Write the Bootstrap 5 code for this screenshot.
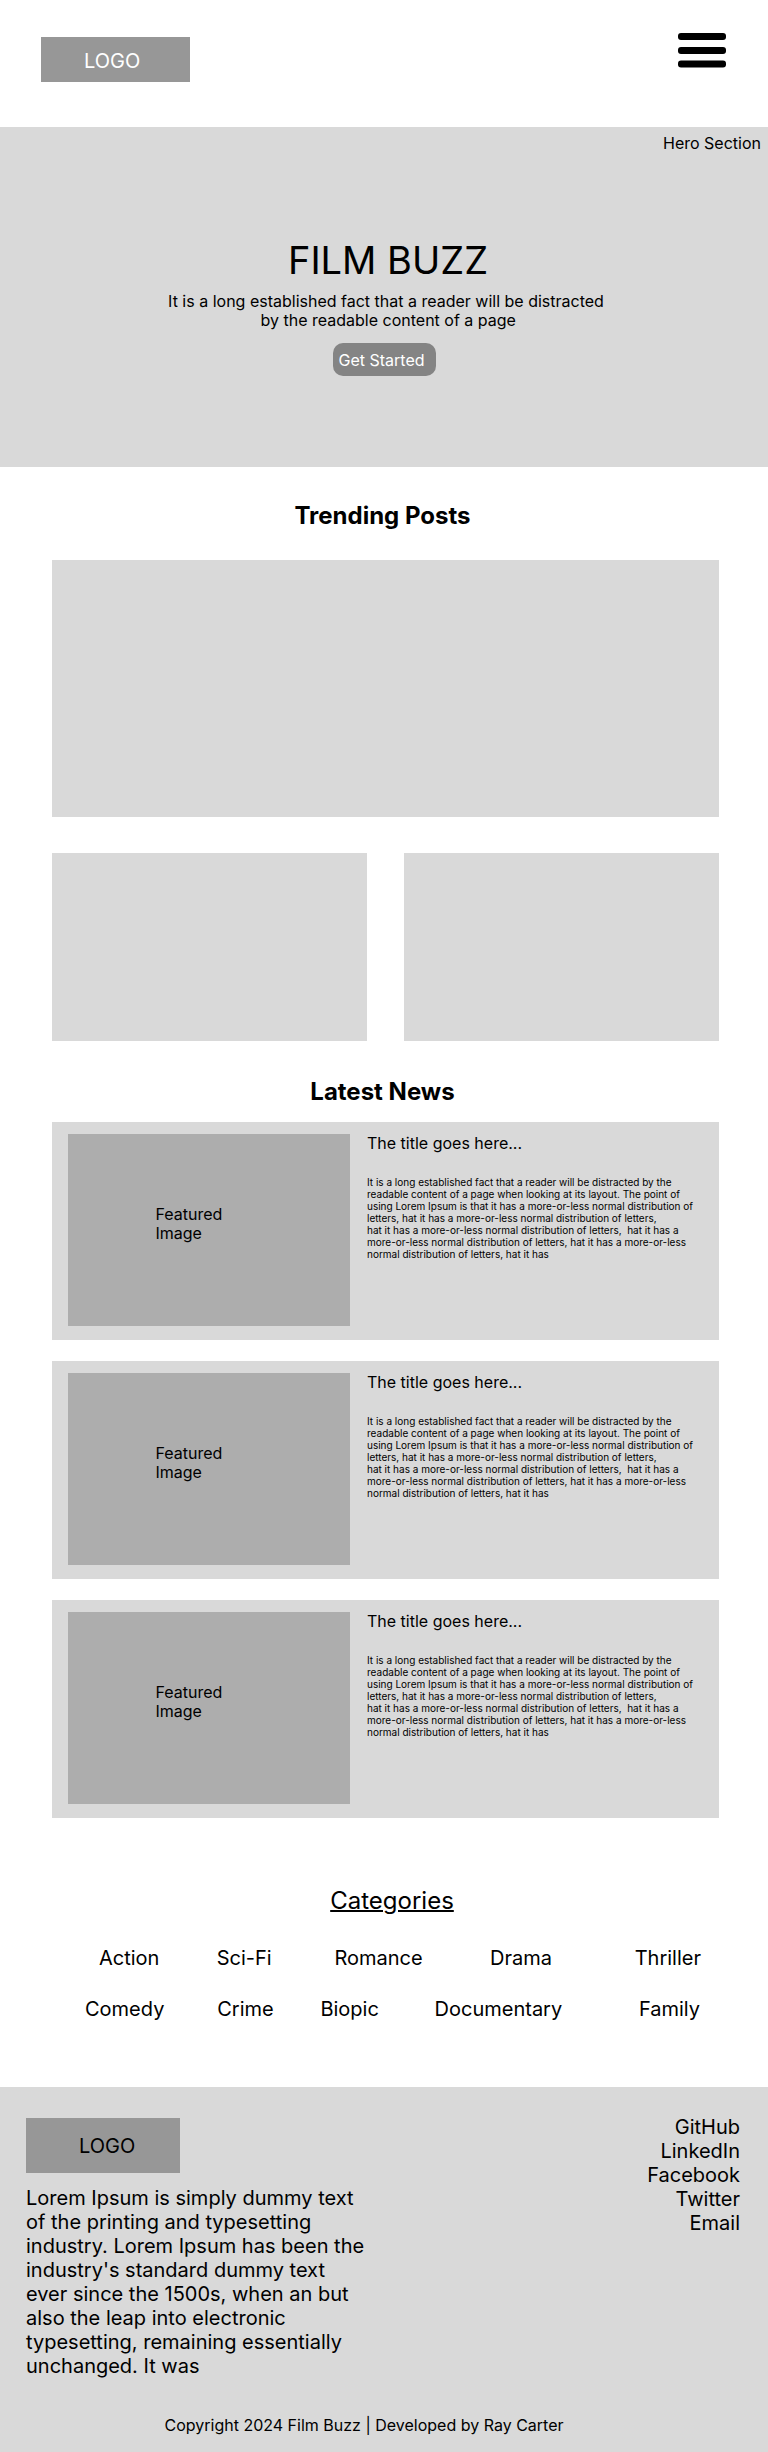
<!DOCTYPE html>
<html lang="en">
<head>
<meta charset="utf-8">
<meta name="viewport" content="width=device-width, initial-scale=1">
<title>Film Buzz</title>
<link href="https://cdn.jsdelivr.net/npm/bootstrap@5.3.0/dist/css/bootstrap.min.css" rel="stylesheet">
<style>
  body { font-family: Inter, "Liberation Sans", sans-serif; font-size: 16px; line-height: 19px; color: #000; background: #fff; }
  a { color: inherit; text-decoration: none; }
  .panel { background: #d9d9d9; }

  .site-header { padding: 33px 42px 45px 41px; }
  .brand { background: #979797; font-size: 20px; line-height: 24px; }
  .brand-top { width: 149px; padding: 12px 0 9px 43px; color: #fff; }
  .brand-foot { width: 154px; padding: 16px 0 15px 53px; }
  .menu-btn { line-height: 0; }

  .hero { padding: 7px 7px 91px; }
  .hero h1 { font-size: 38px; line-height: 48px; font-weight: 400; margin: 83px 0 8px; }
  .hero-text { margin-bottom: 13px; }
  .cta { --bs-btn-color: #fff; --bs-btn-bg: #848484; --bs-btn-border-width: 0; --bs-btn-hover-color: #fff; --bs-btn-hover-bg: #707070;
         width: 103px; padding: 8px 6px 6px; border-radius: 10px; line-height: 19px; text-align: left; }

  .section-title { font-size: 24px; line-height: 29px; font-weight: 700; text-align: center; margin: 0; }
  .trending .section-title { padding: 34px 3px 30px 0; }
  .news .section-title { padding: 36px 3px 16px 0; }
  .inset { margin: 0 49px 0 52px; }
  .tiles { display: grid; grid-template-columns: 1fr 1fr; gap: 36px 37px; }
  .tile-wide { grid-column: 1 / -1; aspect-ratio: 667 / 257; }
  .tile { aspect-ratio: 315 / 188; }

  .news-list { display: grid; gap: 21px; }
  .news-item { display: grid; grid-template-columns: 282px 1fr; gap: 17px; padding: 12px 16px 14px 16px; }
  .thumb { background: #adadad; min-height: 192px; padding-bottom: 12px; }
  .thumb span { width: 107px; }
  .news-item h3 { font-size: 16px; line-height: 19px; font-weight: 400; margin: 0 0 23px; }
  .news-item p { font-size: 10px; line-height: 12px; margin: 0; }

  .genres { padding: 68px 0 66px; font-size: 20px; line-height: 24px; }
  .genres h2 { font-size: 24px; line-height: 29px; font-weight: 400; margin: 0 0 31px; text-decoration: underline; text-decoration-thickness: 2px; }
  .genre-row { display: grid; }
  .genre-row.first { grid-template-columns: 118fr 118fr 156fr 145fr auto; padding: 0 67px 27px 99px; }
  .genre-row.second { grid-template-columns: 132fr 103fr 114fr 204fr auto; padding: 0 68px 0 85px; }

  .site-footer { padding: 28px 28px 17px 26px; }
  .footer-main { font-size: 20px; line-height: 24px; }
  .about { max-width: 340px; padding-top: 3px; }
  .about p { margin: 13px 0 0; }
  .copyright { margin: 38px 0 0; padding-right: 38px; }
</style>
</head>
<body>
<header class="site-header d-flex justify-content-between align-items-start">
  <a href="#" class="brand brand-top mt-1">LOGO</a>
  <button type="button" class="menu-btn btn p-0 border-0" aria-label="Menu">
    <svg width="48" height="35" viewBox="0 0 48 35" aria-hidden="true">
      <rect width="48" height="7" y="0" rx="3"/><rect width="48" height="7" y="14" rx="3"/><rect width="48" height="7" y="27.5" rx="3"/>
    </svg>
  </button>
</header>

<main>
  <section class="hero panel text-center">
    <div class="text-end">Hero Section</div>
    <h1 class="ps-2">FILM BUZZ</h1>
    <p class="hero-text ps-1">It is a long established fact that a reader will be distracted<br>&nbsp;by the readable content of a page</p>
    <button type="button" class="btn cta">Get Started</button>
  </section>

  <section class="trending">
    <h2 class="section-title">Trending Posts</h2>
    <div class="tiles inset">
      <div class="tile-wide panel"></div>
      <div class="tile panel"></div>
      <div class="tile panel"></div>
    </div>
  </section>

  <section class="news">
    <h2 class="section-title">Latest News</h2>
    <div class="news-list inset">
      <article class="news-item panel">
        <div class="thumb d-flex align-items-center justify-content-center"><span>Featured Image</span></div>
        <div>
          <h3>The title goes here...</h3>
          <p>It is a long established fact that a reader will be distracted by the readable content of a page when looking at its layout. The point of using Lorem Ipsum is that it has a more-or-less normal distribution of letters, hat it has a more-or-less normal distribution of letters,<br>hat it has a more-or-less normal distribution of letters,&nbsp; hat it has a more-or-less normal distribution of letters, hat it has a more-or-less normal distribution of letters, hat it has</p>
        </div>
      </article>
      <article class="news-item panel">
        <div class="thumb d-flex align-items-center justify-content-center"><span>Featured Image</span></div>
        <div>
          <h3>The title goes here...</h3>
          <p>It is a long established fact that a reader will be distracted by the readable content of a page when looking at its layout. The point of using Lorem Ipsum is that it has a more-or-less normal distribution of letters, hat it has a more-or-less normal distribution of letters,<br>hat it has a more-or-less normal distribution of letters,&nbsp; hat it has a more-or-less normal distribution of letters, hat it has a more-or-less normal distribution of letters, hat it has</p>
        </div>
      </article>
      <article class="news-item panel">
        <div class="thumb d-flex align-items-center justify-content-center"><span>Featured Image</span></div>
        <div>
          <h3>The title goes here...</h3>
          <p>It is a long established fact that a reader will be distracted by the readable content of a page when looking at its layout. The point of using Lorem Ipsum is that it has a more-or-less normal distribution of letters, hat it has a more-or-less normal distribution of letters,<br>hat it has a more-or-less normal distribution of letters,&nbsp; hat it has a more-or-less normal distribution of letters, hat it has a more-or-less normal distribution of letters, hat it has</p>
        </div>
      </article>
    </div>
  </section>

  <section class="genres">
    <h2 class="text-center ps-3">Categories</h2>
    <nav aria-label="Categories">
      <div class="genre-row first">
        <a href="#">Action</a><a href="#">Sci-Fi</a><a href="#">Romance</a><a href="#">Drama</a><a href="#">Thriller</a>
      </div>
      <div class="genre-row second">
        <a href="#">Comedy</a><a href="#">Crime</a><a href="#">Biopic</a><a href="#">Documentary</a><a href="#">Family</a>
      </div>
    </nav>
  </section>
</main>

<footer class="site-footer panel">
  <div class="footer-main d-flex justify-content-between">
    <div class="about">
      <a href="#" class="brand brand-foot d-block">LOGO</a>
      <p>Lorem Ipsum is simply dummy text of the printing and typesetting industry. Lorem Ipsum has been the industry's standard dummy text ever since the 1500s, when an but also the leap into electronic typesetting, remaining essentially unchanged. It was</p>
    </div>
    <nav class="d-flex flex-column text-end" aria-label="Social links">
      <a href="#">GitHub</a><a href="#">LinkedIn</a><a href="#">Facebook</a><a href="#">Twitter</a><a href="#">Email</a>
    </nav>
  </div>
  <p class="copyright text-center">Copyright 2024 Film Buzz | Developed by Ray Carter</p>
</footer>
<script src="https://cdn.jsdelivr.net/npm/bootstrap@5.3.0/dist/js/bootstrap.bundle.min.js"></script>
</body>
</html>
